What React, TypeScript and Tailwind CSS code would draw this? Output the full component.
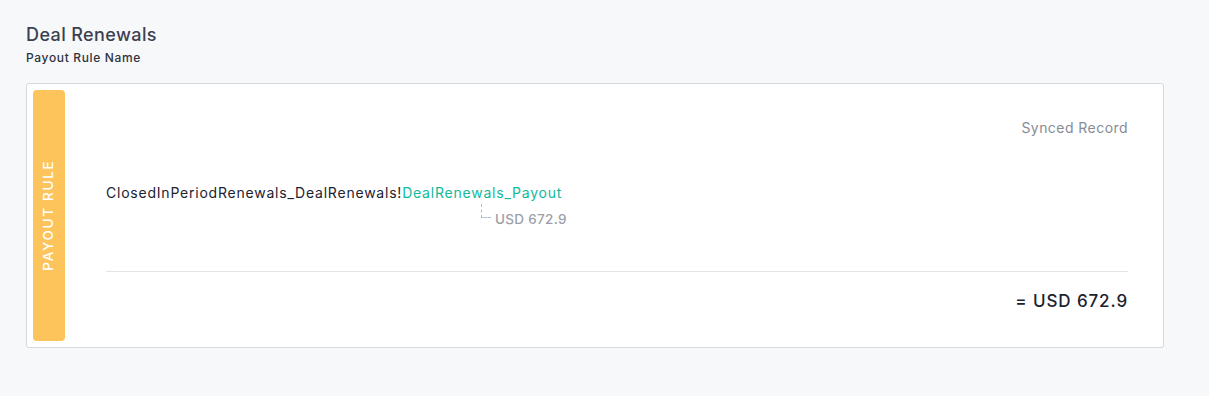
import React from "react";

export default function App() {
  return (
    <div className="min-h-[396px] w-full bg-[#f7f8fa] px-[26px] pt-[24px]" style={{ fontFamily: "Inter, 'Noto Sans', sans-serif" }}>
      <div className="text-[18px] leading-[22px] font-medium tracking-[0.4px] text-[#3b4150]">Deal Renewals</div>
      <div className="text-[12px] leading-[16px] font-medium tracking-[0.65px] text-[#2e3440] mt-[4px]">Payout Rule Name</div>
      <div className="mt-[17px] w-[1138px] h-[265px] bg-white border border-[#d6d8dc] rounded-[3px] flex p-[6px]">
        <div className="w-[32px] h-full bg-[#fdc45b] rounded-[4px] flex items-center justify-center shrink-0">
          <div className="-rotate-90 whitespace-nowrap text-white text-[13.5px] font-medium tracking-[1.7px]">PAYOUT RULE</div>
        </div>
        <div className="flex-1 flex flex-col pl-[41px] pr-[29px]">
          <div className="text-right text-[14px] tracking-[0.45px] text-[#868c96] mt-[29px] leading-[18px]">Synced Record</div>
          <div className="mt-[47px] text-[14px] tracking-[0.78px] leading-[18px] text-[#1c2230] whitespace-nowrap">
            ClosedInPeriodRenewals_DealRenewals!<span className="text-[#13b89a]">DealRenewals_Payout</span>
          </div>
          <div className="flex items-start pl-[375px]">
            <div className="w-[10px] h-[14px] border-l border-b border-dashed border-[#a9bfd6] mt-[2px]"></div>
            <div className="ml-[4px] text-[13.5px] tracking-[0.3px] leading-[18px] text-[#9ca0a8] font-medium mt-[8px]">USD 672.9</div>
          </div>
          <div className="mt-[43px] border-t border-[#e3e4e7]"></div>
          <div className="mt-[18px] text-right text-[17px] tracking-[0.9px] leading-[22px] font-medium text-[#1c2230]">= USD 672.9</div>
        </div>
      </div>
    </div>
  );
}
